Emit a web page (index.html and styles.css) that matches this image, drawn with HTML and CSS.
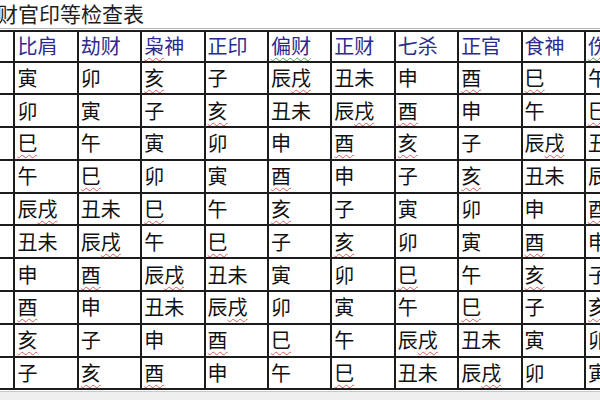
FILE: index.html
```html
<!DOCTYPE html>
<html lang="zh-CN">
<head>
<meta charset="utf-8">
<title>财官印等检查表</title>
<link rel="stylesheet" href="styles.css">
</head>
<body>
<div class="title">财官印等检查表</div>
<div class="sheet">
<table class="grid">
<colgroup>
<col><col><col><col><col><col><col><col><col><col><col>
</colgroup>
<thead>
<tr class="head">
<th></th><th>比肩</th><th>劫财</th><th><span class="w">枭</span>神</th><th>正印</th><th><span class="g">偏财</span></th><th>正财</th><th>七杀</th><th>正官</th><th>食神</th><th><span class="g">伤</span>官</th>
</tr>
</thead>
<tbody>
<tr><td></td><td>寅</td><td>卯</td><td><span class="w">亥</span></td><td>子</td><td>辰<span class="w">戌</span></td><td>丑未</td><td>申</td><td><span class="w">酉</span></td><td><span class="w">巳</span></td><td>午</td></tr>
<tr><td></td><td>卯</td><td>寅</td><td>子</td><td><span class="w">亥</span></td><td>丑未</td><td>辰<span class="w">戌</span></td><td><span class="w">酉</span></td><td>申</td><td>午</td><td><span class="w">巳</span></td></tr>
<tr><td></td><td><span class="w">巳</span></td><td>午</td><td>寅</td><td>卯</td><td>申</td><td><span class="w">酉</span></td><td><span class="w">亥</span></td><td>子</td><td>辰<span class="w">戌</span></td><td>丑未</td></tr>
<tr><td></td><td>午</td><td><span class="w">巳</span></td><td>卯</td><td>寅</td><td><span class="w">酉</span></td><td>申</td><td>子</td><td><span class="w">亥</span></td><td>丑未</td><td>辰<span class="w">戌</span></td></tr>
<tr><td></td><td>辰<span class="w">戌</span></td><td>丑未</td><td><span class="w">巳</span></td><td>午</td><td><span class="w">亥</span></td><td>子</td><td>寅</td><td>卯</td><td>申</td><td><span class="w">酉</span></td></tr>
<tr><td></td><td>丑未</td><td>辰<span class="w">戌</span></td><td>午</td><td><span class="w">巳</span></td><td>子</td><td><span class="w">亥</span></td><td>卯</td><td>寅</td><td><span class="w">酉</span></td><td>申</td></tr>
<tr><td></td><td>申</td><td><span class="w">酉</span></td><td>辰<span class="w">戌</span></td><td>丑未</td><td>寅</td><td>卯</td><td><span class="w">巳</span></td><td>午</td><td><span class="w">亥</span></td><td>子</td></tr>
<tr><td></td><td><span class="w">酉</span></td><td>申</td><td>丑未</td><td>辰<span class="w">戌</span></td><td>卯</td><td>寅</td><td>午</td><td><span class="w">巳</span></td><td>子</td><td><span class="w">亥</span></td></tr>
<tr><td></td><td><span class="w">亥</span></td><td>子</td><td>申</td><td><span class="w">酉</span></td><td><span class="w">巳</span></td><td>午</td><td>辰<span class="w">戌</span></td><td>丑未</td><td>寅</td><td>卯</td></tr>
<tr><td></td><td>子</td><td><span class="w">亥</span></td><td><span class="w">酉</span></td><td>申</td><td>午</td><td><span class="w">巳</span></td><td>丑未</td><td>辰<span class="w">戌</span></td><td>卯</td><td>寅</td></tr>
</tbody>
</table>
</div>
<div class="below"></div>
</body>
</html>
```
FILE: styles.css
```css
html, body {
  margin: 0;
  padding: 0;
  background: #ffffff;
  overflow: hidden;
  width: 600px;
  height: 400px;
}

body {
  font-family: "Noto Sans CJK SC", "Noto Sans", sans-serif;
  color: #141414;
}

.title {
  height: 28px;
  line-height: 26px;
  font-size: 21px;
  color: #1e1e1e;
  margin-left: -3px;
  white-space: nowrap;
}

.sheet {
  border-top: 1px solid #b4b4b4;
  padding-top: 1px;
  margin-left: -50px;
  width: 700px;
}

.grid {
  border-collapse: collapse;
  table-layout: fixed;
  width: 697px;
}

.grid col {
  width: 63.4px;
}

.grid th,
.grid td {
  border: 2px solid #1c1c1c;
  padding: 0 0 0 2px;
  text-align: left;
  vertical-align: middle;
  font-size: 20px;
  font-weight: normal;
  line-height: 22px;
  white-space: nowrap;
  overflow: hidden;
}

.head th {
  height: 28.5px;
  color: #2b2b8f;
}

.grid td {
  height: 30.8px;
  color: #111111;
}

.w {
  text-decoration: underline wavy #d85a5a;
  text-decoration-thickness: 1px;
  text-underline-offset: 3px;
}

.g {
  text-decoration: underline wavy #4aa04a;
  text-decoration-thickness: 1px;
  text-underline-offset: 3px;
}

.below {
  border-top: 1px solid #c8c8c8;
  margin-top: 1px;
  height: 20px;
  background: #efefef;
}
```
